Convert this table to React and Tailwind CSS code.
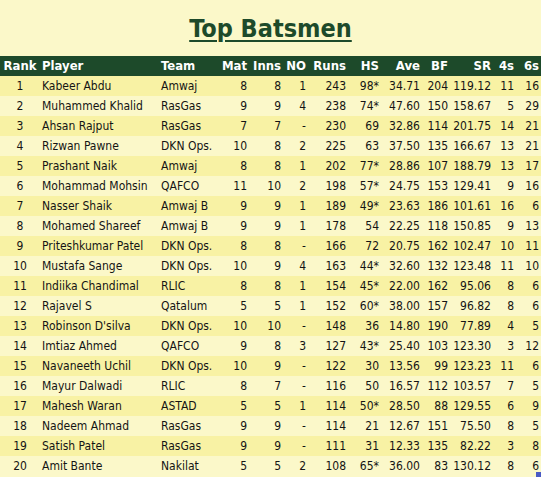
import React from "react";

const rows = [
  [1, "Kabeer Abdu", "Amwaj", 8, 8, "1", 243, "98*", "34.71", 204, "119.12", 11, 16],
  [2, "Muhammed Khalid", "RasGas", 9, 9, "4", 238, "74*", "47.60", 150, "158.67", 5, 29],
  [3, "Ahsan Rajput", "RasGas", 7, 7, "-", 230, "69", "32.86", 114, "201.75", 14, 21],
  [4, "Rizwan Pawne", "DKN Ops.", 10, 8, "2", 225, "63", "37.50", 135, "166.67", 13, 21],
  [5, "Prashant Naik", "Amwaj", 8, 8, "1", 202, "77*", "28.86", 107, "188.79", 13, 17],
  [6, "Mohammad Mohsin", "QAFCO", 11, 10, "2", 198, "57*", "24.75", 153, "129.41", 9, 16],
  [7, "Nasser Shaik", "Amwaj B", 9, 9, "1", 189, "49*", "23.63", 186, "101.61", 16, 6],
  [8, "Mohamed Shareef", "Amwaj B", 9, 9, "1", 178, "54", "22.25", 118, "150.85", 9, 13],
  [9, "Priteshkumar Patel", "DKN Ops.", 8, 8, "-", 166, "72", "20.75", 162, "102.47", 10, 11],
  [10, "Mustafa Sange", "DKN Ops.", 10, 9, "4", 163, "44*", "32.60", 132, "123.48", 11, 10],
  [11, "Indiika Chandimal", "RLIC", 8, 8, "1", 154, "45*", "22.00", 162, "95.06", 8, 6],
  [12, "Rajavel S", "Qatalum", 5, 5, "1", 152, "60*", "38.00", 157, "96.82", 8, 6],
  [13, "Robinson D'silva", "DKN Ops.", 10, 10, "-", 148, "36", "14.80", 190, "77.89", 4, 5],
  [14, "Imtiaz Ahmed", "QAFCO", 9, 8, "3", 127, "43*", "25.40", 103, "123.30", 3, 12],
  [15, "Navaneeth Uchil", "DKN Ops.", 10, 9, "-", 122, "30", "13.56", 99, "123.23", 11, 6],
  [16, "Mayur Dalwadi", "RLIC", 8, 7, "-", 116, "50", "16.57", 112, "103.57", 7, 5],
  [17, "Mahesh Waran", "ASTAD", 5, 5, "1", 114, "50*", "28.50", 88, "129.55", 6, 9],
  [18, "Nadeem Ahmad", "RasGas", 9, 9, "-", 114, "21", "12.67", 151, "75.50", 8, 5],
  [19, "Satish Patel", "RasGas", 9, 9, "-", 111, "31", "12.33", 135, "82.22", 3, 8],
  [20, "Amit Bante", "Nakilat", 5, 5, "2", 108, "65*", "36.00", 83, "130.12", 8, 6],
];

const cols = [
  { label: "Rank", w: 40, align: "text-center" },
  { label: "Player", w: 118, align: "text-left pl-[2px]" },
  { label: "Team", w: 57, align: "text-left pl-[3px]" },
  { label: "Mat", w: 35, align: "text-right pr-[3px]" },
  { label: "Inns", w: 34, align: "text-right pr-[3px]" },
  { label: "NO", w: 25, align: "text-right pr-[3px]" },
  { label: "Runs", w: 40, align: "text-right pr-[3px]" },
  { label: "HS", w: 33, align: "text-right pr-[3px]" },
  { label: "Ave", w: 41, align: "text-right pr-[3px]" },
  { label: "BF", w: 28, align: "text-right pr-[3px]" },
  { label: "SR", w: 43, align: "text-right pr-[3px]" },
  { label: "4s", w: 23, align: "text-right pr-[3px]" },
  { label: "6s", w: 24, align: "text-right pr-[2px]" },
];

export default function App() {
  return (
    <div className="relative w-[541px] h-[477px] overflow-hidden bg-[#fbf8c9] font-['DejaVu_Sans_Condensed','DejaVu_Sans',sans-serif] text-[12px] text-[#141414]">
      <div className="h-[56px] flex items-start justify-center pt-[14px]">
        <h1 className="text-[25px] leading-[30px] font-bold text-[#1d4a2a] underline underline-offset-[3px] decoration-[2px]">
          Top Batsmen
        </h1>
      </div>
      <table className="table-fixed border-collapse w-[541px]">
        <colgroup>
          {cols.map((c) => (
            <col key={c.label} style={{ width: c.w }} />
          ))}
        </colgroup>
        <thead>
          <tr className="h-[20px] bg-[#1d4a2a] text-white font-bold text-[13px]">
            {cols.map((c) => (
              <th key={c.label} className={`p-0 leading-[20px] whitespace-nowrap ${c.align}`}>
                {c.label}
              </th>
            ))}
          </tr>
        </thead>
        <tbody>
          {rows.map((r, i) => (
            <tr key={r[0]} className={`h-[20px] ${i % 2 === 0 ? "bg-[#f8f2a4]" : "bg-[#fbf8c9]"}`}>
              {r.map((v, j) => (
                <td key={j} className={`p-0 leading-[20px] whitespace-nowrap ${cols[j].align}`}>
                  {v}
                </td>
              ))}
            </tr>
          ))}
        </tbody>
      </table>
      <div className="absolute right-0 bottom-0 w-[5px] h-[5px] bg-[#4a5bc4]" />
    </div>
  );
}
